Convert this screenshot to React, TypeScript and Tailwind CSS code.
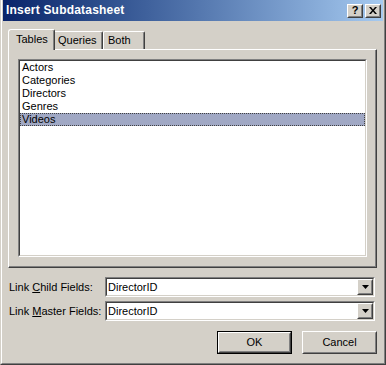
import React from "react";

const font = { fontFamily: '"Liberation Sans", Arial, sans-serif' };

function Sunken({ className, children }: { className?: string; children?: React.ReactNode }) {
  return (
    <div className={"border border-t-[#808080] border-l-[#808080] border-b-white border-r-white " + (className ?? "")}>
      <div className="w-full h-full border border-t-[#404040] border-l-[#404040] border-b-[#d4d0c8] border-r-[#d4d0c8] bg-white">
        {children}
      </div>
    </div>
  );
}

function Raised({ className, children }: { className?: string; children?: React.ReactNode }) {
  return (
    <div className={"border border-t-white border-l-white border-b-[#404040] border-r-[#404040] bg-[#d4d0c8] " + (className ?? "")}>
      <div className="w-full h-full border border-t-[#d4d0c8] border-l-[#d4d0c8] border-b-[#808080] border-r-[#808080] flex items-center justify-center">
        {children}
      </div>
    </div>
  );
}

function Arrow() {
  return (
    <svg width="7" height="4" viewBox="0 0 7 4">
      <path d="M0 0H7L3.5 4Z" fill="#000" />
    </svg>
  );
}

function Combo({ value }: { value: string }) {
  return (
    <Sunken className="w-[270px] h-[20px]">
      <div className="flex h-full items-center">
        <div className="flex-1 pl-[1px] text-[11px] text-black leading-none">{value}</div>
        <Raised className="w-[16px] h-[16px]">
          <Arrow />
        </Raised>
      </div>
    </Sunken>
  );
}

export default function App() {
  const items = ["Actors", "Categories", "Directors", "Genres", "Videos"];
  return (
    <div style={font} className="w-[386px] h-[365px] bg-[#d4d0c8] border-l border-r border-b border-l-[#d4d0c8] border-r-[#404040] border-b-[#404040] select-none">
      <div className="w-full h-full border-l border-r border-b border-l-white border-r-[#808080] border-b-[#808080] px-[1px] pb-[1px] flex flex-col">
        {/* Title bar */}
        <div className="h-[21px] bg-gradient-to-r from-[#0a246a] to-[#a6caf0] flex items-center pl-[3px] pr-[2px]">
          <div className="flex-1 text-white font-bold text-[12px] leading-none pb-[1px] tracking-[0.2px]">Insert Subdatasheet</div>
          <div className="flex gap-[2px]">
            <Raised className="w-[16px] h-[14px]">
              <span className="text-[11px] font-bold leading-none text-black">?</span>
            </Raised>
            <Raised className="w-[16px] h-[14px]">
              <svg width="8" height="7" viewBox="0 0 8 7">
                <path d="M0 0h2l2 2.5L6 0h2L5 3.5 8 7H6L4 4.5 2 7H0l3-3.5Z" fill="#000" />
              </svg>
            </Raised>
          </div>
        </div>

        {/* Body */}
        <div className="flex-1 pl-[5px] pr-[6px] pt-[8px] flex flex-col text-[11px] text-black">
          {/* Tabs */}
          <div className="flex items-start h-[20px] relative z-10">
            <div className="h-[21px] w-[47px] border-t border-l border-r border-t-white border-l-white border-r-[#404040] shadow-[inset_-1px_0_0_#808080] rounded-tl-[3px] rounded-tr-[2px] bg-[#d4d0c8] flex items-center pl-[7px] pb-[1px]">
              Tables
            </div>
            <div className="mt-[2px] h-[18px] w-[48px] border-t border-r border-t-white border-r-[#404040] shadow-[inset_-1px_0_0_#808080] rounded-tr-[2px] bg-[#d4d0c8] flex items-center pl-[3px]">
              Queries
            </div>
            <div className="mt-[2px] h-[18px] w-[42px] border-t border-l border-r border-t-white border-l-white border-r-[#404040] shadow-[inset_-1px_0_0_#808080] rounded-tl-[2px] rounded-tr-[2px] bg-[#d4d0c8] flex items-center pl-[4px]">
              Both
            </div>
          </div>
          {/* Panel */}
          <div className="h-[219px] border border-t-white border-l-white border-r-[#404040] border-b-[#404040] shadow-[inset_-1px_-1px_0_#808080] pt-[9px] pl-[9px] pr-[9px] pb-[10px]">
            <Sunken className="w-full h-full">
              <div className="flex flex-col">
                {items.map((it) => (
                  <div
                    key={it}
                    className={
                      "h-[13px] leading-[13px] pl-[2px] " +
                      (it === "Videos" ? "bg-[#a0a8c4] outline outline-1 outline-dotted outline-[#404040] -outline-offset-1" : "")
                    }
                  >
                    {it}
                  </div>
                ))}
              </div>
            </Sunken>
          </div>

          {/* Fields */}
          <div className="mt-[9px] flex flex-col gap-[4px]">
            <div className="flex items-center">
              <div className="w-[97px] pl-[1px]">
                Link <span className="underline">C</span>hild Fields:
              </div>
              <Combo value="DirectorID" />
            </div>
            <div className="flex items-center">
              <div className="w-[97px] pl-[1px]">
                Link <span className="underline">M</span>aster Fields:
              </div>
              <Combo value="DirectorID" />
            </div>
          </div>

          {/* Buttons */}
          <div className="mt-[10px] flex justify-end gap-[10px]">
            <div className="border border-black">
              <Raised className="w-[73px] h-[21px]">OK</Raised>
            </div>
            <Raised className="w-[75px] h-[23px]">Cancel</Raised>
          </div>
        </div>
      </div>
    </div>
  );
}
